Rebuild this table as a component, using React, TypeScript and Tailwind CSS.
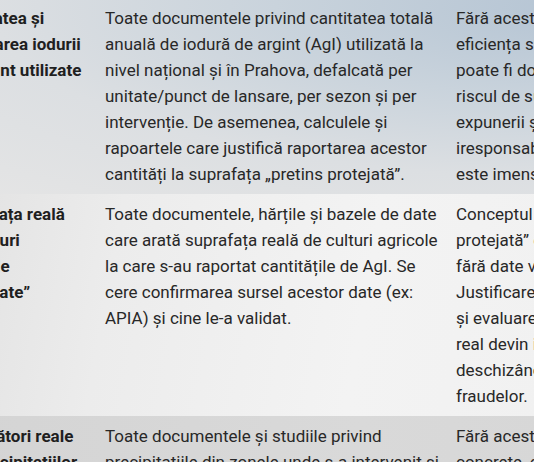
const rows = [
  {
    title: ["Cantitatea și", "raportarea iodurii", "de argint utilizate"],
    body: "Toate documentele privind cantitatea totală anuală de iodură de argint (AgI) utilizată la nivel național și în Prahova, defalcată per unitate/punct de lansare, per sezon și per intervenție. De asemenea, calculele și rapoartele care justifică raportarea acestor cantități la suprafața „pretins protejată”.",
    why: [
      "Fără aceste date, nici",
      "eficiența sau siguranța",
      "poate fi documentată, iar",
      "riscul de supradozare, al",
      "expunerii și al utilizării",
      "iresponsabile a substanței",
      "este imens.",
    ],
    bg: "bg-[radial-gradient(ellipse_at_95%_5%,#b3c3d3_0%,#c9d3dc_35%,#dcdfe2_65%,#e5e5e5_100%)]",
  },
  {
    title: ["Suprafața reală", "de culturi", "agricole", "„protejate”"],
    body: "Toate documentele, hărțile și bazele de date care arată suprafața reală de culturi agricole la care s-au raportat cantitățile de AgI. Se cere confirmarea sursel acestor date (ex: APIA) și cine le-a validat.",
    why: [
      "Conceptul de „suprafață",
      "protejată” este nefondat",
      "fără date verificabile.",
      "Justificarea cantităților",
      "și evaluarea impactului",
      "real devin imposibile,",
      "deschizând calea",
      "fraudelor.",
    ],
    bg: "bg-[linear-gradient(100deg,#e1e1e1_0%,#ececec_25%,#f3f3f3_60%,#f0f0f0_100%)]",
  },
  {
    title: ["Măsurători reale", "ale precipitațiilor"],
    body: "Toate documentele și studiile privind precipitațiile din zonele unde s-a intervenit și rezultatele măsurătorilor efectuate înainte și după fiecare intervenție.",
    why: ["Fără aceste date", "concrete, efectul real", "nu poate fi stabilit."],
    bg: "bg-[linear-gradient(90deg,#d4d4d4_0%,#d9d9d9_60%,#d6d6d6_100%)]",
  },
];

export default function App() {
  return (
    <div
      className="w-[534px] h-[462px] overflow-hidden bg-[#d6d6d6]"
      style={{ fontFamily: "Roboto, 'Noto Sans', sans-serif" }}
    >
      <div className="-mt-[2px] -ml-[60px] w-[700px]">
        {rows.map((row, i) => (
          <div
            key={i}
            className={`grid grid-cols-[159px_351px_1fr] py-[7px] text-[17px] leading-[26px] text-[#282828] ${row.bg}`}
          >
            <div className="pl-2 pr-[6px] font-bold text-[#1f1f1f]">
              {row.title.map((t, j) => (
                <div key={j} className="whitespace-nowrap">{t}</div>
              ))}
            </div>
            <div className="pl-[6px]">{row.body}</div>
            <div className="pl-[6px]">
              {row.why.map((t, j) => (
                <div key={j} className="whitespace-nowrap">{t}</div>
              ))}
            </div>
          </div>
        ))}
      </div>
    </div>
  );
}
